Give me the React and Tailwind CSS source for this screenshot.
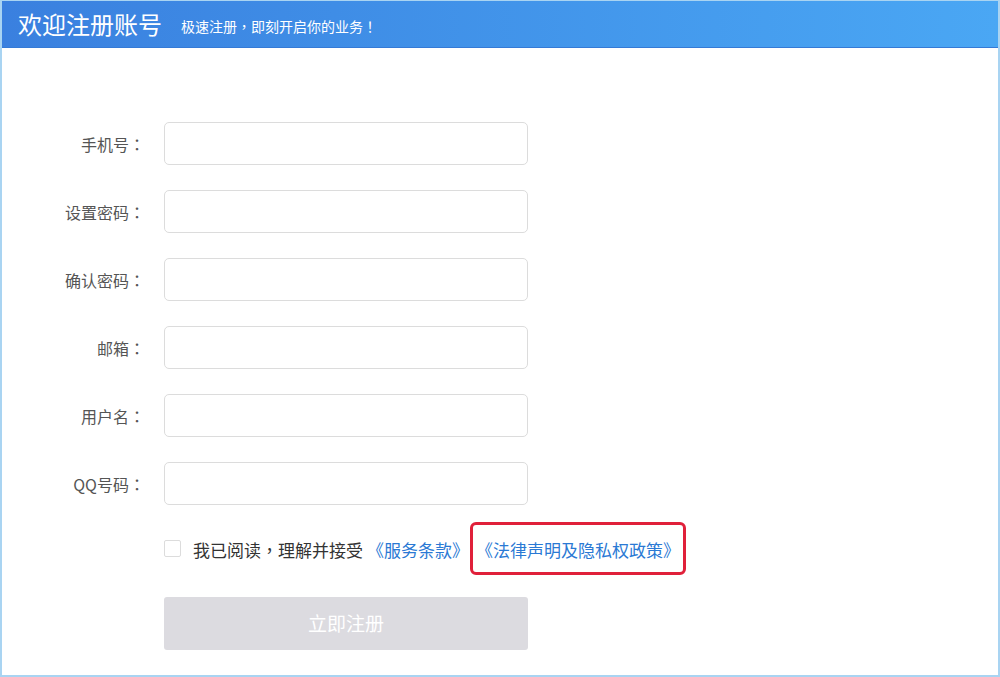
import React, { useState } from 'react';

const fields = ['手机号', '设置密码', '确认密码', '邮箱', '用户名', 'QQ号码'];

// centred full-width punctuation, like the original's system font
const Punct = ({ children }) => (
    <span style={{ fontFamily: '"Noto Sans CJK TC", sans-serif' }}>{children}</span>
);

const App = () => {
    const [agreed, setAgreed] = useState(false);

    return (
        <div
            className="w-[1000px] h-[677px] bg-white border-2 border-t border-[#a9d4f2] flex flex-col overflow-hidden"
            style={{ fontFamily: '"Noto Sans CJK SC", "Noto Sans", sans-serif' }}
        >
            <div className="h-[47px] shrink-0 bg-gradient-to-r from-[#3a80df] to-[#4aa7f4] border-b border-[#357ad6] flex items-center pl-[16px]">
                <h1 className="text-[24px] text-white leading-none">欢迎注册账号</h1>
                <span className="ml-[19px] mt-[3px] text-[14px] text-white leading-none">
                    极速注册<Punct>，</Punct>即刻开启你的业务<Punct>！</Punct>
                </span>
            </div>

            <div className="flex flex-col pt-[74px]">
                {fields.map((label) => (
                    <div key={label} className="flex items-center mb-[25px]">
                        <label className="w-[143px] text-right text-[16px] text-[#555]">
                            {label}<Punct>：</Punct>
                        </label>
                        <input
                            type="text"
                            className="ml-[19px] w-[364px] h-[43px] border border-[#dcdcdc] rounded-[5px] px-3 outline-none"
                        />
                    </div>
                ))}

                <div className="flex items-center h-[53px] -mt-[8px] pl-[162px]">
                    <button
                        onClick={() => setAgreed(!agreed)}
                        className="w-[17px] h-[17px] border border-[#dcdcdc] rounded-[2px] bg-white"
                    >
                        {agreed ? <span className="block w-full h-full bg-[#2a7bd6]" /> : null}
                    </button>
                    <span className="ml-[12px] text-[17px] text-[#333] mt-[2px]">
                        我已阅读<Punct>，</Punct>理解并接受
                    </span>
                    <a className="ml-[4px] text-[17px] text-[#2a79d4] mt-[2px]">《服务条款》</a>
                    <a className="ml-[1px] h-[53px] flex items-center px-[3px] border-[3px] border-[#e0203a] rounded-[6px] text-[17px] text-[#2a79d4]">
                        <span className="mt-[2px]">《法律声明及隐私权政策》</span>
                    </a>
                </div>

                <button className="mt-[22px] ml-[162px] w-[364px] h-[53px] rounded-[3px] bg-[#dcdbe0] text-white text-[19px]">
                    立即注册
                </button>
            </div>
        </div>
    );
};

export default App;
